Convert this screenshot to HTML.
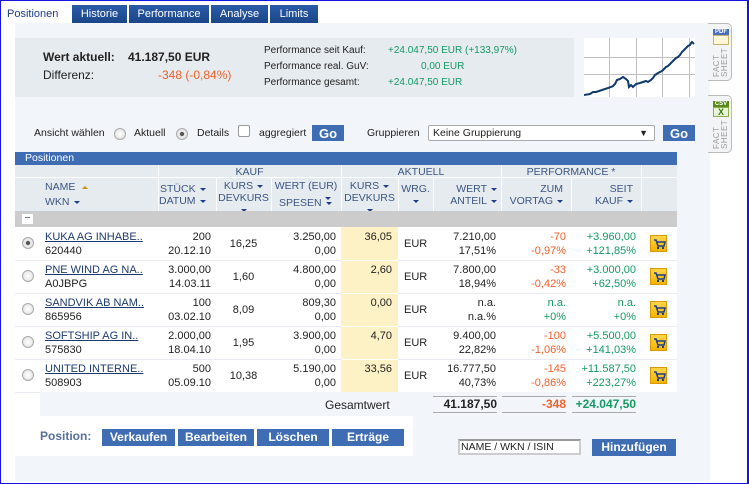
<!DOCTYPE html>
<html><head><meta charset="utf-8"><style>
*{margin:0;padding:0;box-sizing:border-box}
body{width:749px;height:484px;background:#fff;font-family:"Liberation Sans",Arial,sans-serif;font-size:11px;color:#222;position:relative;overflow:hidden}
.a{position:absolute;white-space:nowrap}
.frame{position:absolute;left:0;top:0;width:749px;height:484px;border:1px solid #1515e0;border-right:2px solid #1515e0;z-index:5;pointer-events:none}
.tab{position:absolute;top:5px;height:18px;background:linear-gradient(#2a5ca8,#1a4588);color:#fff;font-size:11px;line-height:18px;text-align:center}
.r{text-align:right}
.c{text-align:center}
.red{color:#f0602a}
.grn{color:#139a63}
.hd{color:#3b5680;font-size:10.5px}
.btn{position:absolute;background:#3f6db3;color:#fff;font-weight:bold;font-size:12px;text-align:center;line-height:17px;height:17px}
.radio{position:absolute;width:12px;height:12px;border-radius:50%;border:1px solid #aaa;background:radial-gradient(#fff,#ddd)}
.cart{position:absolute;width:17px;height:17px;background:linear-gradient(#ffd54a,#f4b400);border:1px solid #d99a00}
.ul{text-decoration:underline;color:#1d3a70}
.sep{position:absolute;background:#fff}
.arr{display:inline-block;width:0;height:0;border-left:3px solid transparent;border-right:3px solid transparent;border-top:3px solid #1d3f8a;margin-left:4px;vertical-align:middle}
.vt{position:absolute;writing-mode:vertical-rl;transform:rotate(180deg);font-size:8px;line-height:8px;color:#999;letter-spacing:0.5px}
</style></head><body>
<div class="frame"></div>
<!-- tabs -->
<div class="a" style="left:7px;top:8px;color:#1d3f8a">Positionen</div>
<div class="tab" style="left:72px;width:55px">Historie</div>
<div class="tab" style="left:129px;width:80px">Performance</div>
<div class="tab" style="left:211px;width:57px">Analyse</div>
<div class="tab" style="left:270px;width:48px">Limits</div>
<!-- panel -->
<div class="a" style="left:15px;top:23px;width:695px;height:458px;background:#f2f5fa"></div>
<div class="a" style="left:15px;top:38px;width:559px;height:59px;background:#e6ebf0"></div>
<div class="a" style="left:43px;top:50px;font-size:12px;font-weight:bold">Wert aktuell:</div>
<div class="a" style="left:128px;top:50px;font-size:12px;font-weight:bold">41.187,50 EUR</div>
<div class="a" style="left:43px;top:68px;font-size:12px">Differenz:</div>
<div class="a red" style="left:158px;top:68px;font-size:12px">-348 (-0,84%)</div>
<div class="a" style="left:264px;top:45px;font-size:10px">Performance seit Kauf:</div>
<div class="a" style="left:264px;top:61px;font-size:10px">Performance real. GuV:</div>
<div class="a" style="left:264px;top:77px;font-size:10px">Performance gesamt:</div>
<div class="a grn" style="left:388px;top:45px;font-size:10px">+24.047,50 EUR (+133,97%)</div>
<div class="a grn" style="left:421px;top:61px;font-size:10px">0,00 EUR</div>
<div class="a grn" style="left:388px;top:77px;font-size:10px">+24.047,50 EUR</div>
<svg class="a" style="left:584px;top:38px" width="111" height="59" viewBox="584 38 111 59">
<rect x="584" y="38" width="111" height="59" fill="#fff"/>
<g stroke="#c0c0c0" stroke-width="1"><line x1="609.5" y1="38" x2="609.5" y2="97"/><line x1="636.5" y1="38" x2="636.5" y2="97"/><line x1="662.5" y1="38" x2="662.5" y2="97"/><line x1="689.5" y1="38" x2="689.5" y2="97"/><line x1="584" y1="57.5" x2="695" y2="57.5"/><line x1="584" y1="74.5" x2="695" y2="74.5"/></g>
<polyline fill="none" stroke="#103a6a" stroke-width="2" points="584,95 590,94 593,92 596,92 599,91 602,90 605,89 608,88 611,87 613,86 615,84 617,80 620,79 623,77 626,79 628,81 629,87 631,85 633,87 636,84 640,83 643,82 646,81 648,82 651,80 653,78 655,75 658,73 660,72 662,71 664,69 666,67 668,66 670,64 672,62 674,60 676,58 678,57 680,55 682,52 684,50 686,48 688,46 690,45 691,43 692,42 694,44"/>
</svg>
<!-- side icons -->
<div class="a" style="left:708px;top:23px;width:24px;height:58px;border:1px solid #bbb;border-left:none;border-radius:0 5px 5px 0;background:#f2f4f6"></div>
<div class="a" style="left:713px;top:29px;width:16px;height:6px;background:#4a6fc0;color:#fff;font-size:6px;line-height:6px;font-weight:bold;text-align:center">PDF</div>
<div class="a" style="left:713px;top:35px;width:16px;height:10px;background:#fff7d8;border:1px solid #c9b36a"></div>
<div class="vt" style="left:713px;top:47px;height:30px">FACT<br>SHEET</div>
<div class="a" style="left:708px;top:95px;width:24px;height:58px;border:1px solid #bbb;border-left:none;border-radius:0 5px 5px 0;background:#f2f4f6"></div>
<div class="a" style="left:713px;top:101px;width:16px;height:6px;background:#5a8a1a;color:#fff;font-size:6px;line-height:6px;font-weight:bold;text-align:center">CSV</div>
<div class="a" style="left:713px;top:107px;width:16px;height:10px;background:#eaf5d8;border:1px solid #8ab04a;color:#3a7a10;font-size:9px;line-height:8px;font-weight:bold;text-align:center">X</div>
<div class="vt" style="left:713px;top:119px;height:30px">FACT<br>SHEET</div>
<!-- controls -->
<div class="a" style="left:34px;top:127px;font-size:10.5px">Ansicht wählen</div>
<div class="radio" style="left:114px;top:128px"></div>
<div class="a" style="left:134px;top:127px;font-size:10.5px">Aktuell</div>
<div class="radio" style="left:176px;top:128px;background:radial-gradient(#555 25%,#eee 35%,#ddd)"></div>
<div class="a" style="left:197px;top:127px;font-size:10.5px">Details</div>
<div class="a" style="left:238px;top:125px;width:12px;height:12px;border:1px solid #999;background:#fff;border-radius:2px"></div>
<div class="a" style="left:259px;top:127px;font-size:10.5px">aggregiert</div>
<div class="btn" style="left:312px;top:125px;width:32px;height:16px;font-size:13px">Go</div>
<div class="a" style="left:367px;top:127px;font-size:10.5px">Gruppieren</div>
<div class="a" style="left:428px;top:125px;width:227px;height:16px;border:1px solid #aaa;border-radius:2px;background:#fff;font-size:10.5px;line-height:14px;padding-left:4px">Keine Gruppierung<span style="position:absolute;right:6px;font-size:9px">▼</span></div>
<div class="btn" style="left:663px;top:125px;width:32px;height:16px;font-size:13px">Go</div>
<!-- table -->
<div class="a" style="left:15px;top:152px;width:662px;height:13px;background:#3f6db3;color:#fff;font-size:10.5px;line-height:13px;padding-left:10px">Positionen</div>
<div class="a" style="left:15px;top:165px;width:662px;height:46px;background:#e6ebf0"></div>
<div class="sep" style="left:15px;top:177px;width:662px;height:1px"></div>
<div class="sep" style="left:158px;top:165px;width:1px;height:46px"></div>
<div class="sep" style="left:341px;top:165px;width:1px;height:46px"></div>
<div class="sep" style="left:501px;top:165px;width:1px;height:46px"></div>
<div class="sep" style="left:641px;top:165px;width:1px;height:46px"></div>
<div class="sep" style="left:216px;top:178px;width:1px;height:33px"></div>
<div class="sep" style="left:271px;top:178px;width:1px;height:33px"></div>
<div class="sep" style="left:398px;top:178px;width:1px;height:33px"></div>
<div class="sep" style="left:433px;top:178px;width:1px;height:33px"></div>
<div class="sep" style="left:571px;top:178px;width:1px;height:33px"></div>
<div class="a hd c" style="left:158px;top:166px;width:183px">KAUF</div>
<div class="a hd c" style="left:341px;top:166px;width:160px">AKTUELL</div>
<div class="a hd c" style="left:501px;top:166px;width:140px">PERFORMANCE *</div>
<div class="a hd" style="left:45px;top:181px">NAME <span style="display:inline-block;border-left:3px solid transparent;border-right:3px solid transparent;border-bottom:3px solid #c89010;margin-left:4px;vertical-align:middle"></span></div>
<div class="a hd" style="left:45px;top:196px">WKN<span class="arr"></span></div>
<div class="a hd" style="left:160px;top:183px">STÜCK<span class="arr"></span></div>
<div class="a hd" style="left:159px;top:195px">DATUM<span class="arr"></span></div>
<div class="a hd c" style="left:216px;top:180px;width:55px">KURS<span class="arr"></span><br>DEVKURS<br><span class="arr" style="margin:0"></span></div>
<div class="a hd c" style="left:271px;top:180px;width:70px">WERT (EUR)<br><span class="arr" style="margin-left:44px"></span></div>
<div class="a hd" style="left:279px;top:197px">SPESEN<span class="arr"></span></div>
<div class="a hd c" style="left:341px;top:180px;width:57px">KURS<span class="arr"></span><br>DEVKURS<br><span class="arr" style="margin:0"></span></div>
<div class="a hd c" style="left:398px;top:183px;width:35px">WRG.<br><span class="arr" style="margin:0"></span></div>
<div class="a hd r" style="left:433px;top:183px;width:64px">WERT<span class="arr"></span><br>ANTEIL<span class="arr"></span></div>
<div class="a hd r" style="left:501px;top:183px;width:62px">ZUM<br>VORTAG<span class="arr"></span></div>
<div class="a hd r" style="left:571px;top:183px;width:62px">SEIT<br>KAUF<span class="arr"></span></div>
<div class="a" style="left:15px;top:211px;width:662px;height:16px;background:#cccccc"></div>
<div class="a" style="left:22px;top:214px;width:11px;height:10px;background:#fff;color:#335;font-size:10px;line-height:9px;text-align:center">−</div>
<!-- rows -->
<div class="a" style="left:15px;top:227px;width:662px;height:165px;background:#fff"></div>
<div class="a" style="left:341px;top:227px;width:57px;height:165px;background:#fdf1c6"></div>
<div class="sep" style="left:15px;top:260px;width:662px;height:1px;background:#e8ecf2"></div>
<div class="sep" style="left:15px;top:293px;width:662px;height:1px;background:#e8ecf2"></div>
<div class="sep" style="left:15px;top:326px;width:662px;height:1px;background:#e8ecf2"></div>
<div class="sep" style="left:15px;top:359px;width:662px;height:1px;background:#e8ecf2"></div>
<div class="sep" style="left:341px;top:260px;width:57px;height:1px"></div>
<div class="sep" style="left:341px;top:293px;width:57px;height:1px"></div>
<div class="sep" style="left:341px;top:326px;width:57px;height:1px"></div>
<div class="sep" style="left:341px;top:359px;width:57px;height:1px"></div>

<div class="radio" style="left:22px;top:237px;background:radial-gradient(#555 25%,#eee 35%,#ddd)"></div>
<div class="a ul" style="left:45px;top:231px">KUKA AG INHABE..</div><div class="a" style="left:45px;top:245px">620440</div>
<div class="a r" style="left:150px;top:231px;width:61px">200</div><div class="a r" style="left:150px;top:245px;width:61px">20.12.10</div>
<div class="a c" style="left:216px;top:238px;width:55px">16,25</div>
<div class="a r" style="left:271px;top:231px;width:65px">3.250,00</div><div class="a r" style="left:271px;top:245px;width:65px">0,00</div>
<div class="a r" style="left:341px;top:231px;width:51px">36,05</div>
<div class="a" style="left:404px;top:238px">EUR</div>
<div class="a r" style="left:433px;top:231px;width:63px">7.210,00</div><div class="a r" style="left:433px;top:245px;width:63px">17,51%</div>
<div class="a r red" style="left:501px;top:231px;width:65px">-70</div><div class="a r red" style="left:501px;top:245px;width:65px">-0,97%</div>
<div class="a r grn" style="left:571px;top:231px;width:65px">+3.960,00</div><div class="a r grn" style="left:571px;top:245px;width:65px">+121,85%</div>

<div class="radio" style="left:22px;top:270px"></div>
<div class="a ul" style="left:45px;top:264px">PNE WIND AG NA..</div><div class="a" style="left:45px;top:278px">A0JBPG</div>
<div class="a r" style="left:150px;top:264px;width:61px">3.000,00</div><div class="a r" style="left:150px;top:278px;width:61px">14.03.11</div>
<div class="a c" style="left:216px;top:271px;width:55px">1,60</div>
<div class="a r" style="left:271px;top:264px;width:65px">4.800,00</div><div class="a r" style="left:271px;top:278px;width:65px">0,00</div>
<div class="a r" style="left:341px;top:264px;width:51px">2,60</div>
<div class="a" style="left:404px;top:271px">EUR</div>
<div class="a r" style="left:433px;top:264px;width:63px">7.800,00</div><div class="a r" style="left:433px;top:278px;width:63px">18,94%</div>
<div class="a r red" style="left:501px;top:264px;width:65px">-33</div><div class="a r red" style="left:501px;top:278px;width:65px">-0,42%</div>
<div class="a r grn" style="left:571px;top:264px;width:65px">+3.000,00</div><div class="a r grn" style="left:571px;top:278px;width:65px">+62,50%</div>

<div class="radio" style="left:22px;top:303px"></div>
<div class="a ul" style="left:45px;top:297px">SANDVIK AB NAM..</div><div class="a" style="left:45px;top:311px">865956</div>
<div class="a r" style="left:150px;top:297px;width:61px">100</div><div class="a r" style="left:150px;top:311px;width:61px">03.02.10</div>
<div class="a c" style="left:216px;top:304px;width:55px">8,09</div>
<div class="a r" style="left:271px;top:297px;width:65px">809,30</div><div class="a r" style="left:271px;top:311px;width:65px">0,00</div>
<div class="a r" style="left:341px;top:297px;width:51px">0,00</div>
<div class="a" style="left:404px;top:304px">EUR</div>
<div class="a r" style="left:433px;top:297px;width:63px">n.a.</div><div class="a r" style="left:433px;top:311px;width:63px">n.a.%</div>
<div class="a r grn" style="left:501px;top:297px;width:65px">n.a.</div><div class="a r grn" style="left:501px;top:311px;width:65px">+0%</div>
<div class="a r grn" style="left:571px;top:297px;width:65px">n.a.</div><div class="a r grn" style="left:571px;top:311px;width:65px">+0%</div>

<div class="radio" style="left:22px;top:336px"></div>
<div class="a ul" style="left:45px;top:330px">SOFTSHIP AG IN..</div><div class="a" style="left:45px;top:344px">575830</div>
<div class="a r" style="left:150px;top:330px;width:61px">2.000,00</div><div class="a r" style="left:150px;top:344px;width:61px">18.04.10</div>
<div class="a c" style="left:216px;top:337px;width:55px">1,95</div>
<div class="a r" style="left:271px;top:330px;width:65px">3.900,00</div><div class="a r" style="left:271px;top:344px;width:65px">0,00</div>
<div class="a r" style="left:341px;top:330px;width:51px">4,70</div>
<div class="a" style="left:404px;top:337px">EUR</div>
<div class="a r" style="left:433px;top:330px;width:63px">9.400,00</div><div class="a r" style="left:433px;top:344px;width:63px">22,82%</div>
<div class="a r red" style="left:501px;top:330px;width:65px">-100</div><div class="a r red" style="left:501px;top:344px;width:65px">-1,06%</div>
<div class="a r grn" style="left:571px;top:330px;width:65px">+5.500,00</div><div class="a r grn" style="left:571px;top:344px;width:65px">+141,03%</div>

<div class="radio" style="left:22px;top:369px"></div>
<div class="a ul" style="left:45px;top:363px">UNITED INTERNE..</div><div class="a" style="left:45px;top:377px">508903</div>
<div class="a r" style="left:150px;top:363px;width:61px">500</div><div class="a r" style="left:150px;top:377px;width:61px">05.09.10</div>
<div class="a c" style="left:216px;top:370px;width:55px">10,38</div>
<div class="a r" style="left:271px;top:363px;width:65px">5.190,00</div><div class="a r" style="left:271px;top:377px;width:65px">0,00</div>
<div class="a r" style="left:341px;top:363px;width:51px">33,56</div>
<div class="a" style="left:404px;top:370px">EUR</div>
<div class="a r" style="left:433px;top:363px;width:63px">16.777,50</div><div class="a r" style="left:433px;top:377px;width:63px">40,73%</div>
<div class="a r red" style="left:501px;top:363px;width:65px">-145</div><div class="a r red" style="left:501px;top:377px;width:65px">-0,86%</div>
<div class="a r grn" style="left:571px;top:363px;width:65px">+11.587,50</div><div class="a r grn" style="left:571px;top:377px;width:65px">+223,27%</div>

<!-- carts -->
<svg width="0" height="0" style="position:absolute"><defs><g id="ct"><path d="M3 4h2l2 6h6l1-4H6" fill="none" stroke="#1d3f8a" stroke-width="1.5"/><rect x="6" y="11" width="2" height="2" fill="#1d3f8a"/><rect x="11" y="11" width="2" height="2" fill="#1d3f8a"/></g></defs></svg>
<div class="cart" style="left:650px;top:235px"><svg width="15" height="15"><use href="#ct"/></svg></div>
<div class="cart" style="left:650px;top:268px"><svg width="15" height="15"><use href="#ct"/></svg></div>
<div class="cart" style="left:650px;top:301px"><svg width="15" height="15"><use href="#ct"/></svg></div>
<div class="cart" style="left:650px;top:334px"><svg width="15" height="15"><use href="#ct"/></svg></div>
<div class="cart" style="left:650px;top:367px"><svg width="15" height="15"><use href="#ct"/></svg></div>

<!-- total row -->
<div class="a" style="left:15px;top:392px;width:25px;height:24px;background:#fff;border-top:1px solid #e8ecf2"></div>
<div class="a" style="left:325px;top:398px;font-size:12px">Gesamtwert</div>
<div class="a r" style="left:433px;top:396px;width:64px;font-size:12px;font-weight:bold;border-bottom:1px solid #aaa;height:17px;border-top:1px solid #aaa">41.187,50</div>
<div class="a r red" style="left:502px;top:396px;width:64px;font-size:12px;font-weight:bold;border-bottom:1px solid #aaa;height:17px;border-top:1px solid #aaa">-348</div>
<div class="a r grn" style="left:572px;top:396px;width:64px;font-size:12px;font-weight:bold;border-bottom:1px solid #aaa;height:17px;border-top:1px solid #aaa">+24.047,50</div>
<div class="a" style="left:15px;top:416px;width:398px;height:40px;background:#fff"></div>
<div class="a" style="left:40px;top:429px;font-size:12px;font-weight:bold;color:#556f9e">Position:</div>
<div class="btn" style="left:102px;top:429px;width:73px">Verkaufen</div>
<div class="btn" style="left:178px;top:429px;width:76px">Bearbeiten</div>
<div class="btn" style="left:257px;top:429px;width:72px">Löschen</div>
<div class="btn" style="left:332px;top:429px;width:72px">Erträge</div>
<div class="a" style="left:458px;top:439px;width:123px;height:16px;border:2px solid #ccc;border-top-color:#999;background:#fff;font-size:10.5px;line-height:12px;padding-left:1px">NAME / WKN / ISIN</div>
<div class="btn" style="left:592px;top:439px;width:84px">Hinzufügen</div>
</body></html>
